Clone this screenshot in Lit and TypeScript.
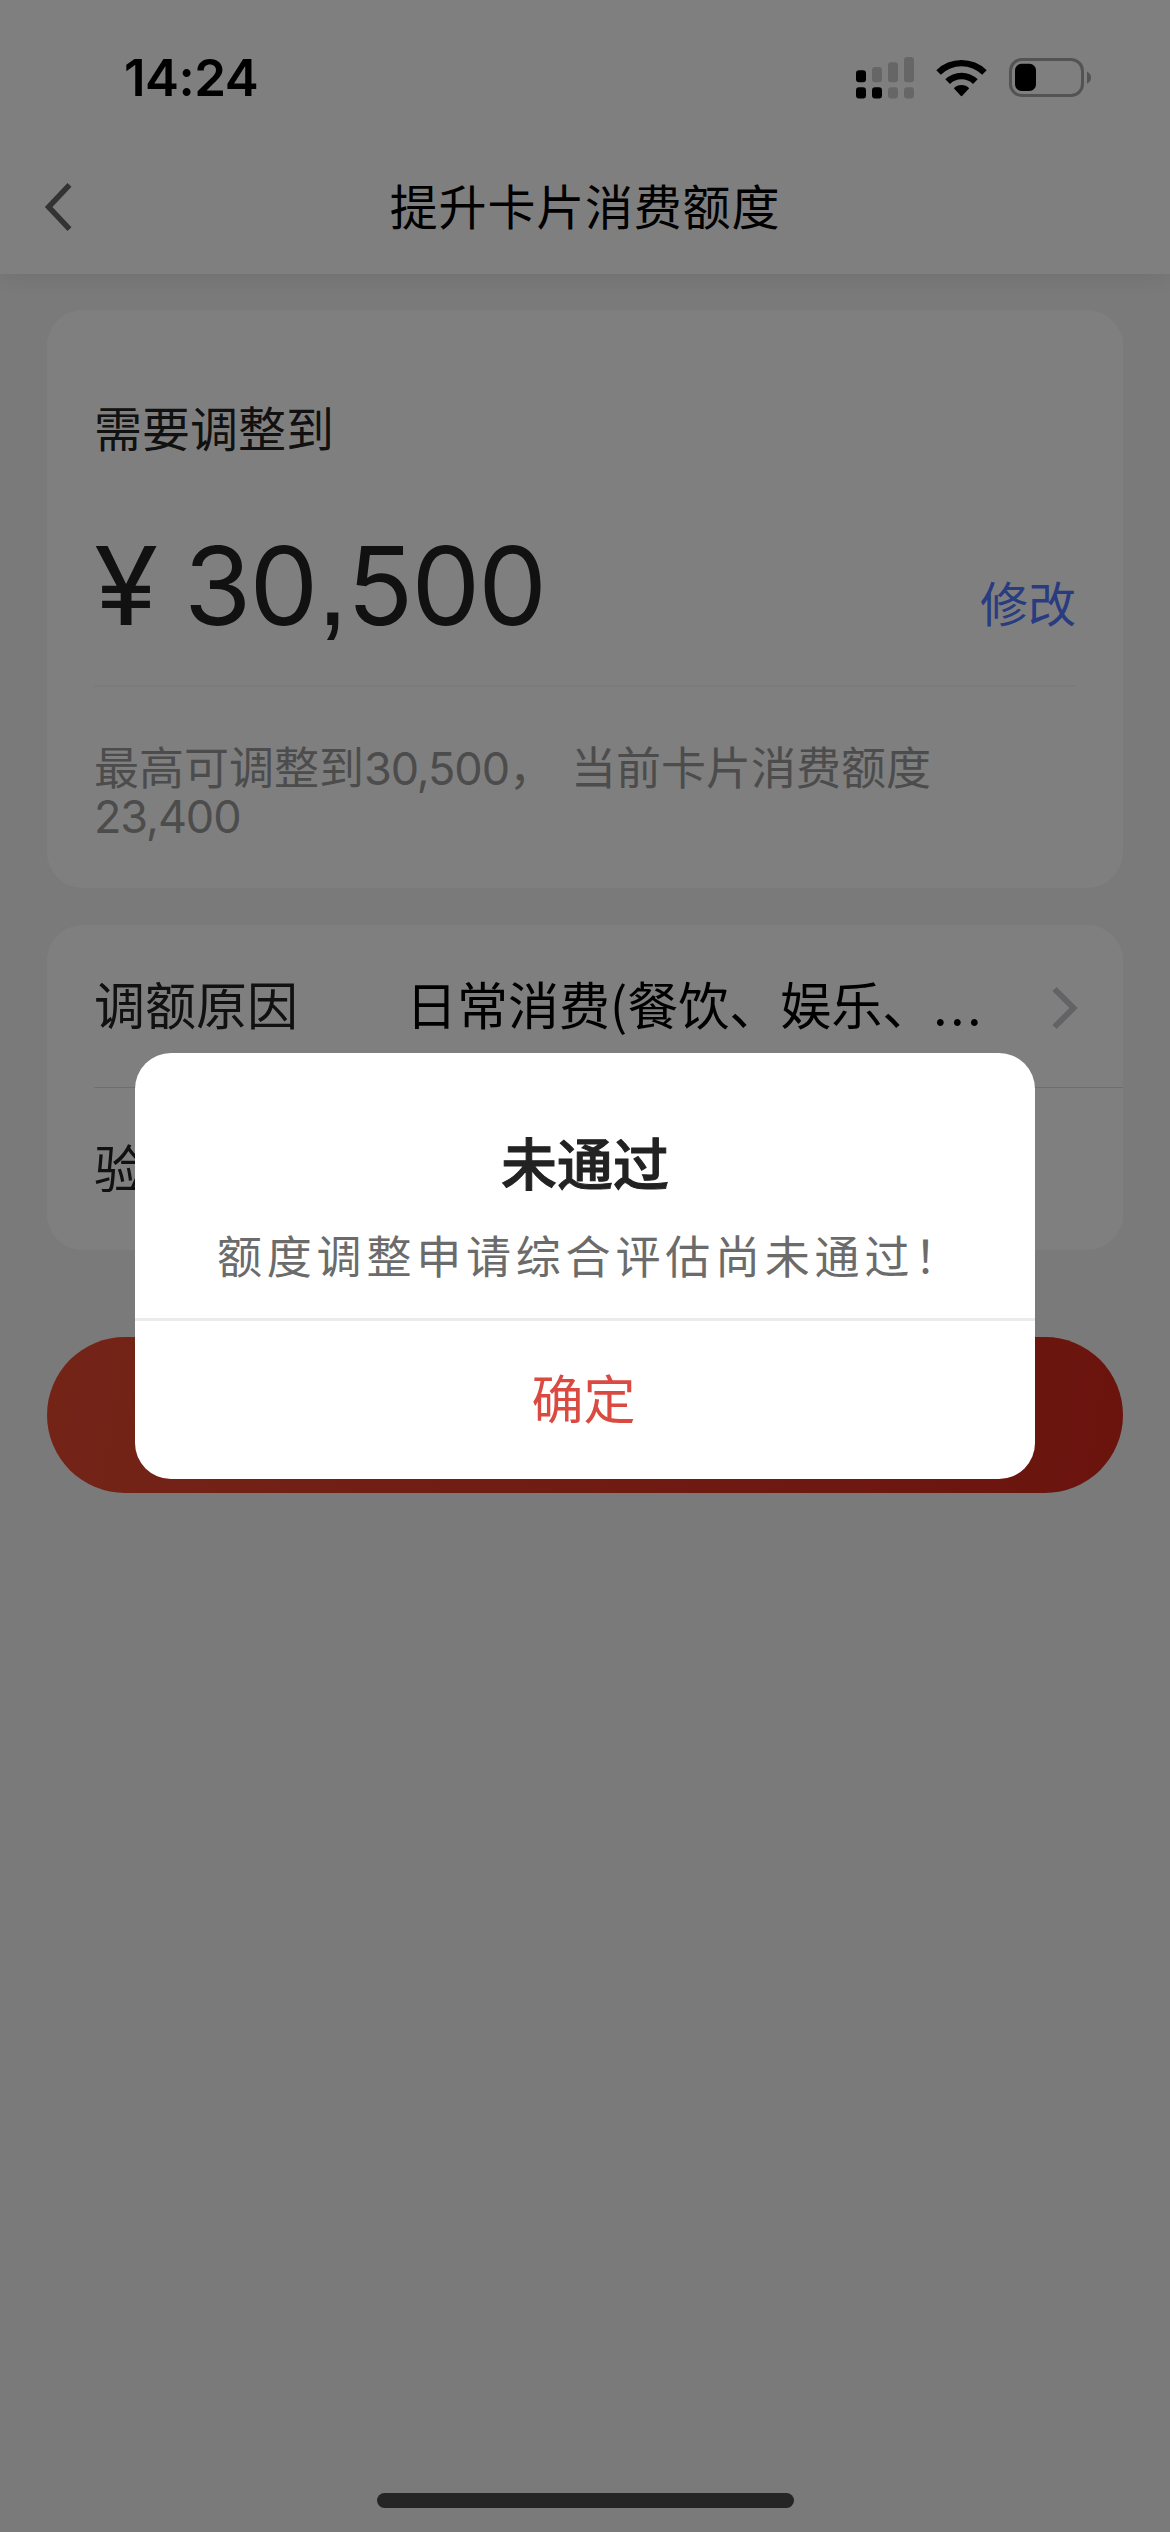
import { LitElement, html, css, svg } from "lit";
import { customElement } from "lit/decorators.js";

const signal = [
  { x: 0, top: 13.3, top2On: true, on: true },
  { x: 16, top: 10, top2On: true, on: false },
  { x: 32, top: 5.3, top2On: false, on: false },
  { x: 48, top: 0, top2On: false, on: false },
];

@customElement("app-root")
export class AppRoot extends LitElement {
  static styles = css`
    :host {
      display: block;
      position: relative;
      width: 1170px;
      height: 2532px;
      overflow: hidden;
      background: #f5f5f5;
      font-family: "Noto Sans CJK SC", sans-serif;
      font-weight: 400;
      color: #222;
    }
    * {
      box-sizing: border-box;
    }
    svg {
      display: block;
      flex: none;
    }
    .header {
      position: relative;
      height: 274px;
      background: #fff;
      box-shadow: 0 2px 26px rgba(0, 0, 0, 0.1);
    }
    .status {
      display: flex;
      align-items: center;
      height: 141px;
      padding: 14px 79px 0 124px;
    }
    .time {
      flex: 1;
      font: 600 51px/60px Inter, sans-serif;
      letter-spacing: -0.5px;
      color: #000;
    }
    .icons {
      display: flex;
      align-items: center;
    }
    .wifi {
      margin-left: 22px;
    }
    .battery {
      margin-left: 22px;
    }
    .nav {
      display: grid;
      grid-template-columns: 120px 1fr 120px;
      align-items: center;
      height: 132px;
    }
    .back {
      margin-left: 44px;
    }
    .title {
      padding-bottom: 7px;
      text-align: center;
      font-size: 48px;
      line-height: 60px;
      letter-spacing: 0.8px;
      color: #000;
    }
    .content {
      display: flex;
      flex-direction: column;
      padding: 36px 47px 0;
    }
    .card {
      background: #fff;
      border-radius: 36px;
    }
    .amount-card {
      height: 578px;
      padding: 86px 47px 0;
    }
    .label {
      font-size: 48px;
      line-height: 60px;
    }
    .amount-row {
      display: flex;
      justify-content: space-between;
      height: 231px;
      border-bottom: 2px solid #f6f6f6;
    }
    .amount {
      display: flex;
      padding-top: 63px;
      font: 400 109px/132px Inter, sans-serif;
      letter-spacing: -1.8px;
      white-space: pre;
    }
    .yen {
      width: 90px;
      transform: scaleX(1.07);
      transform-origin: 0 50%;
    }
    .comma {
      font-family: "Liberation Sans", sans-serif;
      font-size: 116px;
    }
    .edit {
      padding-top: 115px;
      font-size: 48px;
      line-height: 60px;
      color: #5078ff;
    }
    .hint {
      padding-top: 55px;
      font-size: 45px;
      line-height: 48px;
      color: #999;
      white-space: pre;
    }
    .num {
      font-family: Inter, sans-serif;
      line-height: 0;
      letter-spacing: -1.1px;
    }
    .gap {
      display: inline-block;
      width: 17px;
    }
    .rows {
      margin-top: 37px;
      height: 325px;
      padding-left: 47px;
    }
    .row {
      display: flex;
      align-items: center;
      height: 162px;
      padding-right: 44px;
      font-size: 51px;
      line-height: 60px;
    }
    .row + .row {
      height: 163px;
      border-top: 1px solid #dcdcdc;
    }
    .key {
      width: 312px;
      padding-bottom: 6px;
    }
    .value {
      flex: 1;
      padding-bottom: 6px;
      color: #000;
      white-space: nowrap;
    }
    .dots {
      letter-spacing: 2.8px;
    }
    .arrow {
      position: relative;
      top: 2px;
    }
    .submit {
      margin-top: 87px;
      height: 156px;
      border-radius: 78px;
      background: linear-gradient(100deg, #e8492f, #d6281d);
    }
    .overlay {
      position: absolute;
      inset: 0;
      display: flex;
      align-items: center;
      justify-content: center;
      background: rgba(0, 0, 0, 0.5);
    }
    .dialog {
      display: flex;
      flex-direction: column;
      width: 900px;
      height: 426px;
      border-radius: 36px;
      background: #fff;
      overflow: hidden;
    }
    .body {
      height: 268px;
      padding-top: 73px;
      border-bottom: 3px solid #ebebeb;
    }
    .heading {
      text-align: center;
      font-size: 56px;
      line-height: 70px;
      font-weight: 500;
      -webkit-text-stroke: 1px #222;
    }
    .message {
      padding: 29px 0 0 82px;
      font-size: 45px;
      line-height: 60px;
      letter-spacing: 4.8px;
      color: #6b6b6b;
      white-space: nowrap;
    }
    .confirm {
      flex: 1;
      display: flex;
      align-items: center;
      justify-content: center;
      padding: 0 3px 6px 0;
      font-size: 52px;
      line-height: 60px;
      color: #db4a41;
    }
    .home {
      position: absolute;
      left: 377px;
      bottom: 24px;
      width: 417px;
      height: 15px;
      border-radius: 8px;
      background: #252525;
    }
  `;

  private signalIcon() {
    return html`<svg width="58" height="42" viewBox="0 0 58 42">
      ${signal.map(
        (s) => svg`
          <rect x=${s.x} y=${s.top} width="10" height=${25.3 - s.top} rx="3" fill=${s.on ? "#000" : "#ccc"}></rect>
          <rect x=${s.x} y="30.2" width="10" height="11.2" rx="3" fill=${s.top2On ? "#000" : "#ccc"}></rect>`
      )}
    </svg>`;
  }

  render() {
    return html`
      <div class="header">
        <div class="status">
          <div class="time">14:24</div>
          <div class="icons">
            ${this.signalIcon()}
            <svg class="wifi" width="51" height="38" viewBox="0 0 51 38">
              <path d="M0.3 11.2 A36 36 0 0 1 50.7 11.2 L46.2 15.8 A29.6 29.6 0 0 0 4.8 15.8 Z" />
              <path d="M9.3 20.3 A23.3 23.3 0 0 1 41.7 20.3 L37 25 A16.6 16.6 0 0 0 14 25 Z" />
              <path d="M17.8 29.2 A11 11 0 0 1 33.2 29.2 L26.3 36.8 Q25.5 37.6 24.7 36.8 Z" />
            </svg>
            <svg class="battery" width="82" height="39" viewBox="0 0 82 39">
              <rect x="1.5" y="1.5" width="72" height="36" rx="11.5" fill="none" stroke="#a6a6a6" stroke-width="3" />
              <rect x="6" y="5.8" width="21" height="27.2" rx="6.5" />
              <path d="M78 13.5 Q82 15.5 82 19.6 Q82 23.8 78 25.8 Z" fill="#a6a6a6" />
            </svg>
          </div>
        </div>
        <div class="nav">
          <svg class="back" width="30" height="50" viewBox="0 0 30 50" fill="none" stroke="#666" stroke-width="5.5">
            <path d="M25.5 2.8 L4.6 25 L25.5 47.2" />
          </svg>
          <div class="title">提升卡片消费额度</div>
        </div>
      </div>

      <div class="content">
        <div class="card amount-card">
          <div class="label">需要调整到</div>
          <div class="amount-row">
            <div class="amount"><span class="yen">¥</span><span>30</span><span class="comma">,</span><span>500</span></div>
            <div class="edit">修改</div>
          </div>
          <div class="hint">最高可调整到<span class="num">30,500</span>，<span class="gap"></span>当前卡片消费额度<br /><span class="num">23,400</span></div>
        </div>

        <div class="card rows">
          <div class="row">
            <div class="key">调额原因</div>
            <div class="value">日常消费(餐饮、娱乐、<span class="dots">...</span></div>
            <svg class="arrow" width="28" height="46" viewBox="0 0 28 46" fill="none" stroke="#c7c7cc" stroke-width="6">
              <path d="M3.5 4 L22.5 23 L3.5 42" />
            </svg>
          </div>
          <div class="row"><div class="key">验</div></div>
        </div>

        <div class="submit"></div>
      </div>

      <div class="overlay">
        <div class="dialog">
          <div class="body">
            <div class="heading">未通过</div>
            <div class="message">额度调整申请综合评估尚未通过！</div>
          </div>
          <div class="confirm">确定</div>
        </div>
      </div>
      <div class="home"></div>
    `;
  }
}
